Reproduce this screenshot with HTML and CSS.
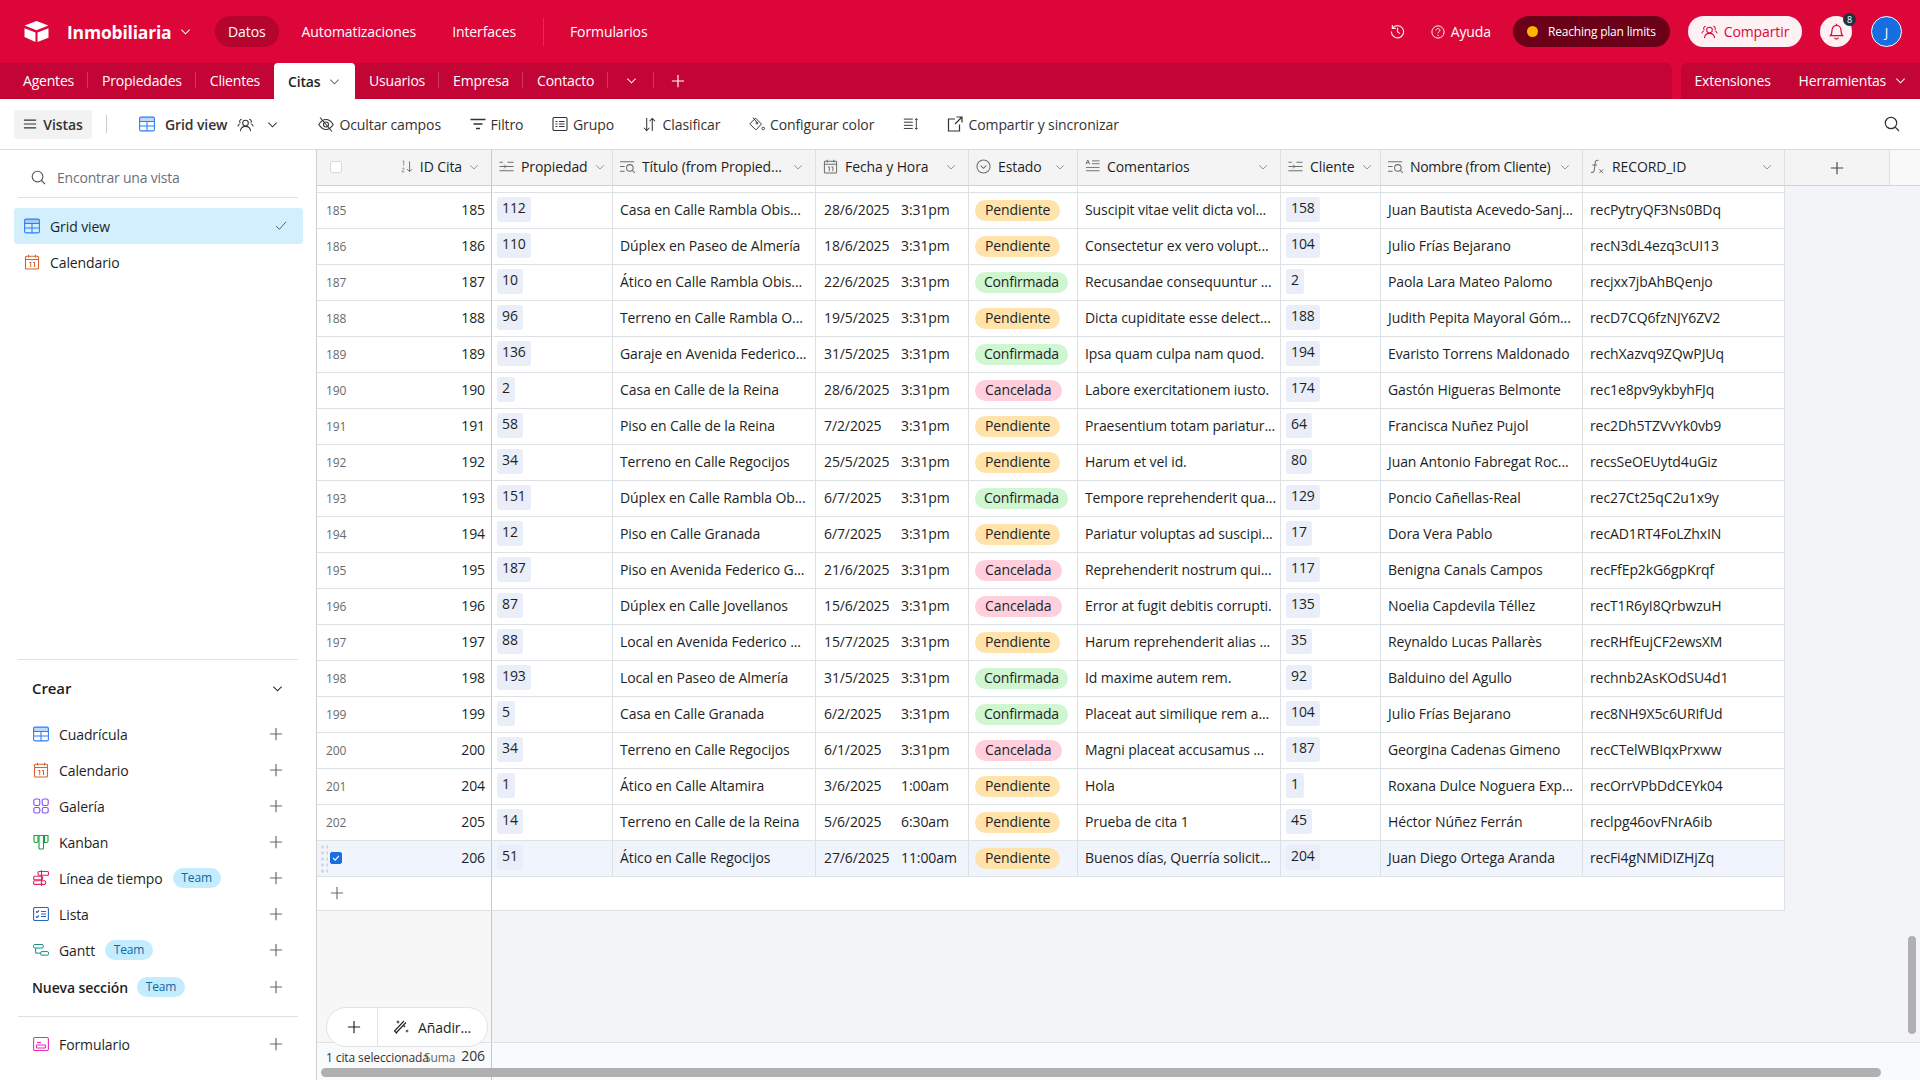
FILE: index.html
```html
<!DOCTYPE html>
<html lang="es">

<head>
    <meta charset="UTF-8">
    <title>Inmobiliaria: Citas</title>
    <link rel="stylesheet" href="styles.css">
</head>

<body>
    <!-- icon sprite -->
    <svg class="sprite" xmlns="http://www.w3.org/2000/svg">
        <symbol id="i-chev" viewBox="0 0 12 12"><path d="M1.5 4l4.5 4.5L10.5 4" fill="none" stroke="currentColor" stroke-width="1.1"/></symbol>
        <symbol id="i-plus" viewBox="0 0 16 16"><path d="M8 1v14M1 8h14" fill="none" stroke="currentColor" stroke-width="1.3"/></symbol>
        <symbol id="i-search" viewBox="0 0 16 16"><circle cx="7" cy="7" r="5.7" fill="none" stroke="currentColor" stroke-width="1.2"/><path d="M11.2 11.2L15 15" stroke="currentColor" stroke-width="1.2"/></symbol>
        <symbol id="i-grid" viewBox="0 0 16 16"><g fill="none" stroke="currentColor" stroke-width="1.1"><rect x=".6" y="1.1" width="14.8" height="13.8" rx="1.5"/><path d="M.6 5.5h14.8M.6 10h14.8M8 5.5v9.4"/></g><rect x=".6" y="1.1" width="14.8" height="4.4" fill="currentColor" opacity=".3"/></symbol>
        <symbol id="i-cal" viewBox="0 0 16 16"><g fill="none" stroke="currentColor" stroke-width="1.1"><rect x="1.5" y="2.3" width="13" height="12.7" rx="1"/><path d="M1.5 5.5h13M4.5 .8v2.8M11.5 .8v2.8"/></g><path d="M5.2 8h2v5h-1v-4h-1zM9 8h2v5h-1v-4H9z" fill="currentColor"/></symbol>
        <symbol id="i-gallery" viewBox="0 0 16 16"><g fill="none" stroke="currentColor" stroke-width="1.1"><rect x=".8" y="1" width="6" height="6.5" rx="1.8"/><rect x="9.2" y="1" width="6" height="6.5" rx="1.8"/><rect x=".8" y="9.5" width="6" height="5.5" rx="1.8"/><rect x="9.2" y="9.5" width="6" height="5.5" rx="1.8"/></g></symbol>
        <symbol id="i-kanban" viewBox="0 0 16 16"><g fill="none" stroke="currentColor" stroke-width="1.1"><path d="M1 1.5h4V7a1.5 1.5 0 0 1-1.5 1.5h-1A1.5 1.5 0 0 1 1 7z"/><path d="M6 1.5h4.5V14a1 1 0 0 1-1 1H7a1 1 0 0 1-1-1z"/><path d="M11.5 1.5H15V7a1.5 1.5 0 0 1-1.5 1.5h-2z"/></g></symbol>
        <symbol id="i-time" viewBox="0 0 16 16"><g fill="none" stroke="currentColor" stroke-width="1.1"><path d="M8.5 0v16"/><rect x="5" y="1.5" width="10.5" height="3.8" rx="1.2"/><rect x=".6" y="6.2" width="9" height="3.6" rx="1.2"/><rect x=".6" y="10.8" width="12" height="3.6" rx="1.2"/></g></symbol>
        <symbol id="i-list" viewBox="0 0 16 16"><g fill="none" stroke="currentColor" stroke-width="1.1"><rect x=".6" y="1.5" width="14.8" height="13" rx="1.2"/><path d="M3 5.5l1 1 2-2M3 10.5l1 1 2-2M8 5.5h5M8 8h5M8 10.5h5"/></g></symbol>
        <symbol id="i-gantt" viewBox="0 0 18 14"><g fill="none" stroke="currentColor" stroke-width="1.1"><rect x=".6" y=".8" width="11" height="4" rx="1.5"/><rect x="8.5" y="8.8" width="9" height="4" rx="1.5"/><path d="M3 5v5.5h5.5"/></g></symbol>
        <symbol id="i-form" viewBox="0 0 16 16"><g fill="none" stroke="currentColor" stroke-width="1.1"><rect x=".6" y="1.5" width="14.8" height="13" rx="1.5"/><rect x="3.5" y="9" width="9" height="3" rx=".5"/><path d="M4 6.5h4"/></g></symbol>
        <symbol id="i-menu" viewBox="0 0 16 16"><path d="M1 3.5h14M1 8h14M1 12.5h14" stroke="currentColor" stroke-width="1.3"/></symbol>
        <symbol id="i-people" viewBox="0 0 18 16"><g fill="none" stroke="currentColor" stroke-width="1.1"><circle cx="9" cy="6.5" r="3"/><path d="M3.5 15c.5-3.5 2.5-5 5.5-5s5 1.5 5.5 5"/><path d="M5 2.5a2.3 2.3 0 0 0-1.5 4M.8 10c.2-1.2 1-2 2-2.5M13 2.500a2.3 2.3 0 0 1 1.5 4M17.2 10c-.2-1.2-1-2-2-2.5"/></g></symbol>
        <symbol id="i-eyeoff" viewBox="0 0 16 16"><g fill="none" stroke="currentColor" stroke-width="1.1"><path d="M.8 8.5C3 5 5.5 3.5 8 3.5s5 1.5 7.2 5C13 12 10.500 13.500 8 13.500S3 12 .8 8.500z"/><circle cx="8" cy="8.5" r="2.5"/><path d="M2 1.500l12 14"/></g></symbol>
        <symbol id="i-filter" viewBox="0 0 16 16"><path d="M.5 3.5h15M3.5 8h9M6 12.5h4" stroke="currentColor" stroke-width="1.3"/></symbol>
        <symbol id="i-group" viewBox="0 0 16 16"><g fill="none" stroke="currentColor" stroke-width="1.1"><rect x="1" y="1.5" width="14" height="13" rx="1.2"/><path d="M3.5 5.5h2M7 5.5h5.5M3.5 8h2M7 8h5.5M3.5 10.5h2M7 10.5h5.5"/></g></symbol>
        <symbol id="i-updown" viewBox="0 0 14 16"><path d="M4 1v13.5M1 11.5l3 3 3-3M10 15V1.5M7 4.5l3-3 3 3" fill="none" stroke="currentColor" stroke-width="1.1"/></symbol>
        <symbol id="i-paint" viewBox="0 0 18 16"><g fill="none" stroke="currentColor" stroke-width="1.1"><path d="M7.5 1.5L14 8l-5.5 6a1 1 0 0 1-1.5 0L1.5 8.5a1 1 0 0 1 0-1.5z"/><path d="M4.5 .8L9 6.3"/><circle cx="9" cy="7" r="1"/></g><circle cx="16" cy="13" r="1.5" fill="none" stroke="currentColor"/></symbol>
        <symbol id="i-height" viewBox="0 0 18 16"><path d="M1 2.5h10M1 6h10M1 9.5h10M1 13h10" stroke="currentColor" stroke-width="1.1"/><path d="M15 2v12M13.5 3.5L15 2l1.5 1.5M13.5 12.5L15 14l1.5-1.5" fill="none" stroke="currentColor"/></symbol>
        <symbol id="i-share" viewBox="0 0 16 16"><path d="M8 3H1.500v12h11V8.500M9.500 1H15v5.500M15 1L8 8" fill="none" stroke="currentColor" stroke-width="1.2"/></symbol>
        <symbol id="i-sortnum" viewBox="0 0 14 16"><path d="M10 2v12M7 11l3 3 3-3" fill="none" stroke="currentColor" stroke-width="1.1"/><path d="M2 2l1.200-.8V7M1.200 10.500a1.300 1.300 0 0 1 2.500.3c0 1-2.500 2.200-2.500 3.500h2.700" fill="none" stroke="currentColor" stroke-width=".8"/></symbol>
        <symbol id="i-link" viewBox="0 0 16 16"><path d="M.5 8h15M.5 12.5h15M9 3.5h6.5M.5 3.5H4" stroke="currentColor" stroke-width="1.1"/><path d="M5.5 6l2 2-2 2" fill="none" stroke="currentColor"/></symbol>
        <symbol id="i-lookup" viewBox="0 0 16 16"><g fill="none" stroke="currentColor" stroke-width="1.1"><path d="M0 3h15M0 8h5M0 13h5"/><circle cx="10.5" cy="9.5" r="3.5"/><path d="M13 12l2.8 2.8"/></g></symbol>
        <symbol id="i-select" viewBox="0 0 16 16"><circle cx="8" cy="8" r="7" fill="none" stroke="currentColor" stroke-width="1.1"/><path d="M5 7l3 3 3-3" fill="none" stroke="currentColor" stroke-width="1.1"/></symbol>
        <symbol id="i-text" viewBox="0 0 16 16"><path d="M1 5.5l2-4.500 2 4.500M1.800 4h2.400M7.500 2h8M7.500 5h8M1 9h14.500M1 12.500h14.500" fill="none" stroke="currentColor"/></symbol>
        <symbol id="i-formula" viewBox="0 0 16 16"><path d="M9 1.500c-2.500-.8-3.200.5-3.500 2.500L4.500 12c-.3 2-1.500 3-3.500 2.200M2.500 6.500h5" fill="none" stroke="currentColor" stroke-width="1.1"/><path d="M10 11l4 4M14 11l-4 4" stroke="currentColor"/></symbol>
        <symbol id="i-history" viewBox="0 0 16 16"><path d="M2.700 4.500A6.500 6.500 0 1 1 1.500 8M2.500 1v3.700h3.700M8 4v4.300l2.500 2" fill="none" stroke="currentColor" stroke-width="1.2"/></symbol>
        <symbol id="i-help" viewBox="0 0 16 16"><circle cx="8" cy="8" r="7" fill="none" stroke="currentColor" stroke-width="1.1"/><path d="M5.800 6.200c0-1.300 1-2.200 2.200-2.200s2.200.9 2.200 2c0 1.700-2.200 1.700-2.200 3.500" fill="none" stroke="currentColor" stroke-width="1.1"/><circle cx="8" cy="11.800" r=".8" fill="currentColor"/></symbol>
        <symbol id="i-bell" viewBox="0 0 16 18"><path d="M1.500 13.500c1.500-1.500 1.700-3 1.700-5.500 0-3 2-5.500 4.800-5.500s4.800 2.500 4.800 5.500c0 2.500.2 4 1.700 5.500zM8 .8v1.700M6 15.500c.3 1 1 1.500 2 1.500s1.700-.5 2-1.500" fill="none" stroke="currentColor" stroke-width="1.3"/></symbol>
        <symbol id="i-wand" viewBox="0 0 16 16"><path d="M13 3.500L3 14M11 2L1.500 12 4 14.500M10 6l2 2" fill="none" stroke="currentColor" stroke-width="1.1"/><path d="M5 1l.6 1.400L7 3l-1.400.6L5 5l-.6-1.400L3 3l1.400-.6zM14 10l.5 1.500 1.500.5-1.500.5L14 14l-.5-1.500L12 12l1.500-.5z" fill="currentColor"/></symbol>
        <symbol id="i-check" viewBox="0 0 14 12"><path d="M1 6l4 4 8-9" fill="none" stroke="currentColor" stroke-width="1.1"/></symbol>
    </svg>

    <header class="topbar">
        <div class="base">
            <svg class="logo" viewBox="0 0 24 20"><path d="M12 0L.6 4.300 12 8.800l11.400-4.500zM13 11v9l10.500-4V6.800zM.5 6.800v8.500L11 20v-9z" fill="#fff"/></svg>
            <span class="base-name">Inmobiliaria</span>
            <svg class="ico-s"><use href="#i-chev"/></svg>
        </div>
        <nav class="mainnav">
            <a class="mainnav-item active">Datos</a>
            <a class="mainnav-item">Automatizaciones</a>
            <a class="mainnav-item">Interfaces</a>
            <span class="mainnav-sep"></span>
            <a class="mainnav-item">Formularios</a>
        </nav>
        <div class="top-right">
            <svg class="ico-history"><use href="#i-history"/></svg>
            <span class="help"><svg class="ico"><use href="#i-help"/></svg>Ayuda</span>
            <span class="limits"><i class="limits-dot"></i>Reaching plan limits</span>
            <span class="share-btn"><svg class="ico-people"><use href="#i-people"/></svg>Compartir</span>
            <span class="bell"><svg class="ico-bell"><use href="#i-bell"/></svg><b class="bell-badge">8</b></span>
            <span class="avatar">J</span>
        </div>
    </header>

    <div class="tabbar">
        <div class="tabs">
            <a class="tab sep">Agentes</a>
            <a class="tab sep">Propiedades</a>
            <a class="tab">Clientes</a>
            <a class="tab active">Citas<svg class="ico-s"><use href="#i-chev"/></svg></a>
            <a class="tab sep">Usuarios</a>
            <a class="tab sep">Empresa</a>
            <a class="tab sep">Contacto</a>
            <a class="tab tab-more sep"><svg class="ico-s"><use href="#i-chev"/></svg></a>
            <a class="tab tab-add"><svg class="ico"><use href="#i-plus"/></svg></a>
        </div>
        <div class="tabs-right">
            <a class="tab">Extensiones</a>
            <a class="tab">Herramientas<svg class="ico-s"><use href="#i-chev"/></svg></a>
        </div>
    </div>

    <div class="toolbar">
        <button class="views-btn"><svg class="ico"><use href="#i-menu"/></svg>Vistas</button>
        <span class="toolbar-sep"></span>
        <span class="tool view-name"><svg class="ico-16 blue"><use href="#i-grid"/></svg><b>Grid view</b><svg class="ico-people"><use href="#i-people"/></svg><svg class="ico-s view-chev"><use href="#i-chev"/></svg></span>
        <span class="tool"><svg class="ico-16"><use href="#i-eyeoff"/></svg>Ocultar campos</span>
        <span class="tool"><svg class="ico-16"><use href="#i-filter"/></svg>Filtro</span>
        <span class="tool"><svg class="ico-16"><use href="#i-group"/></svg>Grupo</span>
        <span class="tool"><svg class="ico-sort"><use href="#i-updown"/></svg>Clasificar</span>
        <span class="tool"><svg class="ico-16"><use href="#i-paint"/></svg>Configurar color</span>
        <span class="tool"><svg class="ico-16"><use href="#i-height"/></svg></span>
        <span class="tool"><svg class="ico-16"><use href="#i-share"/></svg>Compartir y sincronizar</span>
        <svg class="ico-16 toolbar-search"><use href="#i-search"/></svg>
    </div>

    <div class="main">
        <aside class="sidebar">
            <div class="view-search"><svg class="ico-search"><use href="#i-search"/></svg>Encontrar una vista</div>
            <div class="view-list">
                <div class="view-item selected"><svg class="ico-16 blue"><use href="#i-grid"/></svg>Grid view<svg class="view-check"><use href="#i-check"/></svg></div>
                <div class="view-item"><svg class="ico-16 orange"><use href="#i-cal"/></svg>Calendario</div>
            </div>
            <div class="create">
                <div class="create-head">Crear<svg class="ico-s"><use href="#i-chev"/></svg></div>
                <div class="create-item"><svg class="ico-16 blue"><use href="#i-grid"/></svg>Cuadrícula<svg class="add"><use href="#i-plus"/></svg></div>
                <div class="create-item"><svg class="ico-16 orange"><use href="#i-cal"/></svg>Calendario<svg class="add"><use href="#i-plus"/></svg></div>
                <div class="create-item"><svg class="ico-16 purple"><use href="#i-gallery"/></svg>Galería<svg class="add"><use href="#i-plus"/></svg></div>
                <div class="create-item"><svg class="ico-16 green"><use href="#i-kanban"/></svg>Kanban<svg class="add"><use href="#i-plus"/></svg></div>
                <div class="create-item"><svg class="ico-16 rose"><use href="#i-time"/></svg>Línea de tiempo<span class="team">Team</span><svg class="add"><use href="#i-plus"/></svg></div>
                <div class="create-item"><svg class="ico-16 navy"><use href="#i-list"/></svg>Lista<svg class="add"><use href="#i-plus"/></svg></div>
                <div class="create-item"><svg class="ico-16 teal"><use href="#i-gantt"/></svg>Gantt<span class="team">Team</span><svg class="add"><use href="#i-plus"/></svg></div>
                <div class="create-item section">Nueva sección<span class="team">Team</span><svg class="add"><use href="#i-plus"/></svg></div>
                <div class="create-item form-item"><svg class="ico-16 pink"><use href="#i-form"/></svg>Formulario<svg class="add"><use href="#i-plus"/></svg></div>
            </div>
        </aside>

        <section class="gridarea">
            <div class="row head">
                <div class="c c-first"><i class="checkbox"></i><svg class="ico-head sort-ico"><use href="#i-sortnum"/></svg><span>ID Cita</span><svg class="ico-s"><use href="#i-chev"/></svg></div>
                <div class="c"><svg class="ico-head"><use href="#i-link"/></svg><span>Propiedad</span><svg class="ico-s"><use href="#i-chev"/></svg></div>
                <div class="c"><svg class="ico-head"><use href="#i-lookup"/></svg><span>Título (from Propied...</span><svg class="ico-s"><use href="#i-chev"/></svg></div>
                <div class="c"><svg class="ico-head"><use href="#i-cal"/></svg><span>Fecha y Hora</span><svg class="ico-s"><use href="#i-chev"/></svg></div>
                <div class="c"><svg class="ico-head"><use href="#i-select"/></svg><span>Estado</span><svg class="ico-s"><use href="#i-chev"/></svg></div>
                <div class="c"><svg class="ico-head"><use href="#i-text"/></svg><span>Comentarios</span><svg class="ico-s"><use href="#i-chev"/></svg></div>
                <div class="c"><svg class="ico-head"><use href="#i-link"/></svg><span>Cliente</span><svg class="ico-s"><use href="#i-chev"/></svg></div>
                <div class="c"><svg class="ico-head"><use href="#i-lookup"/></svg><span class="head-tight">Nombre (from Cliente)</span><svg class="ico-s"><use href="#i-chev"/></svg></div>
                <div class="c"><svg class="ico-head"><use href="#i-formula"/></svg><span>RECORD_ID</span><svg class="ico-s"><use href="#i-chev"/></svg></div>
                <div class="c c-add"><svg class="ico-add"><use href="#i-plus"/></svg></div>
            </div>

            <div class="row gap"><div class="c c-first"></div><div class="c"></div><div class="c"></div><div class="c"></div><div class="c"></div><div class="c"></div><div class="c"></div><div class="c"></div><div class="c"></div></div>

            <div class="row"><div class="c c-first"><span class="num">185</span><span class="id">185</span></div><div class="c"><span class="chip">112</span></div><div class="c">Casa en Calle Rambla Obis...</div><div class="c c-date"><span>28/6/2025</span><span>3:31pm</span></div><div class="c"><span class="pill pend">Pendiente</span></div><div class="c">Suscipit vitae velit dicta vol...</div><div class="c"><span class="chip">158</span></div><div class="c">Juan Bautista Acevedo-Sanj...</div><div class="c">recPytryQF3Ns0BDq</div></div>
            <div class="row"><div class="c c-first"><span class="num">186</span><span class="id">186</span></div><div class="c"><span class="chip">110</span></div><div class="c">Dúplex en Paseo de Almería</div><div class="c c-date"><span>18/6/2025</span><span>3:31pm</span></div><div class="c"><span class="pill pend">Pendiente</span></div><div class="c">Consectetur ex vero volupt...</div><div class="c"><span class="chip">104</span></div><div class="c">Julio Frías Bejarano</div><div class="c">recN3dL4ezq3cUI13</div></div>
            <div class="row"><div class="c c-first"><span class="num">187</span><span class="id">187</span></div><div class="c"><span class="chip">10</span></div><div class="c">Ático en Calle Rambla Obis...</div><div class="c c-date"><span>22/6/2025</span><span>3:31pm</span></div><div class="c"><span class="pill conf">Confirmada</span></div><div class="c">Recusandae consequuntur ...</div><div class="c"><span class="chip">2</span></div><div class="c">Paola Lara Mateo Palomo</div><div class="c">recjxx7jbAhBQenjo</div></div>
            <div class="row"><div class="c c-first"><span class="num">188</span><span class="id">188</span></div><div class="c"><span class="chip">96</span></div><div class="c">Terreno en Calle Rambla O...</div><div class="c c-date"><span>19/5/2025</span><span>3:31pm</span></div><div class="c"><span class="pill pend">Pendiente</span></div><div class="c">Dicta cupiditate esse delect...</div><div class="c"><span class="chip">188</span></div><div class="c">Judith Pepita Mayoral Góm...</div><div class="c">recD7CQ6fzNJY6ZV2</div></div>
            <div class="row"><div class="c c-first"><span class="num">189</span><span class="id">189</span></div><div class="c"><span class="chip">136</span></div><div class="c">Garaje en Avenida Federico...</div><div class="c c-date"><span>31/5/2025</span><span>3:31pm</span></div><div class="c"><span class="pill conf">Confirmada</span></div><div class="c">Ipsa quam culpa nam quod.</div><div class="c"><span class="chip">194</span></div><div class="c">Evaristo Torrens Maldonado</div><div class="c">rechXazvq9ZQwPJUq</div></div>
            <div class="row"><div class="c c-first"><span class="num">190</span><span class="id">190</span></div><div class="c"><span class="chip">2</span></div><div class="c">Casa en Calle de la Reina</div><div class="c c-date"><span>28/6/2025</span><span>3:31pm</span></div><div class="c"><span class="pill canc">Cancelada</span></div><div class="c">Labore exercitationem iusto.</div><div class="c"><span class="chip">174</span></div><div class="c">Gastón Higueras Belmonte</div><div class="c">rec1e8pv9ykbyhFJq</div></div>
            <div class="row"><div class="c c-first"><span class="num">191</span><span class="id">191</span></div><div class="c"><span class="chip">58</span></div><div class="c">Piso en Calle de la Reina</div><div class="c c-date"><span>7/2/2025</span><span>3:31pm</span></div><div class="c"><span class="pill pend">Pendiente</span></div><div class="c">Praesentium totam pariatur...</div><div class="c"><span class="chip">64</span></div><div class="c">Francisca Nuñez Pujol</div><div class="c">rec2Dh5TZVvYk0vb9</div></div>
            <div class="row"><div class="c c-first"><span class="num">192</span><span class="id">192</span></div><div class="c"><span class="chip">34</span></div><div class="c">Terreno en Calle Regocijos</div><div class="c c-date"><span>25/5/2025</span><span>3:31pm</span></div><div class="c"><span class="pill pend">Pendiente</span></div><div class="c">Harum et vel id.</div><div class="c"><span class="chip">80</span></div><div class="c">Juan Antonio Fabregat Roc...</div><div class="c">recsSeOEUytd4uGiz</div></div>
            <div class="row"><div class="c c-first"><span class="num">193</span><span class="id">193</span></div><div class="c"><span class="chip">151</span></div><div class="c">Dúplex en Calle Rambla Ob...</div><div class="c c-date"><span>6/7/2025</span><span>3:31pm</span></div><div class="c"><span class="pill conf">Confirmada</span></div><div class="c">Tempore reprehenderit qua...</div><div class="c"><span class="chip">129</span></div><div class="c">Poncio Cañellas-Real</div><div class="c">rec27Ct25qC2u1x9y</div></div>
            <div class="row"><div class="c c-first"><span class="num">194</span><span class="id">194</span></div><div class="c"><span class="chip">12</span></div><div class="c">Piso en Calle Granada</div><div class="c c-date"><span>6/7/2025</span><span>3:31pm</span></div><div class="c"><span class="pill pend">Pendiente</span></div><div class="c">Pariatur voluptas ad suscipi...</div><div class="c"><span class="chip">17</span></div><div class="c">Dora Vera Pablo</div><div class="c">recAD1RT4FoLZhxIN</div></div>
            <div class="row"><div class="c c-first"><span class="num">195</span><span class="id">195</span></div><div class="c"><span class="chip">187</span></div><div class="c">Piso en Avenida Federico G...</div><div class="c c-date"><span>21/6/2025</span><span>3:31pm</span></div><div class="c"><span class="pill canc">Cancelada</span></div><div class="c">Reprehenderit nostrum qui...</div><div class="c"><span class="chip">117</span></div><div class="c">Benigna Canals Campos</div><div class="c">recFfEp2kG6gpKrqf</div></div>
            <div class="row"><div class="c c-first"><span class="num">196</span><span class="id">196</span></div><div class="c"><span class="chip">87</span></div><div class="c">Dúplex en Calle Jovellanos</div><div class="c c-date"><span>15/6/2025</span><span>3:31pm</span></div><div class="c"><span class="pill canc">Cancelada</span></div><div class="c">Error at fugit debitis corrupti.</div><div class="c"><span class="chip">135</span></div><div class="c">Noelia Capdevila Téllez</div><div class="c">recT1R6yI8QrbwzuH</div></div>
            <div class="row"><div class="c c-first"><span class="num">197</span><span class="id">197</span></div><div class="c"><span class="chip">88</span></div><div class="c">Local en Avenida Federico ...</div><div class="c c-date"><span>15/7/2025</span><span>3:31pm</span></div><div class="c"><span class="pill pend">Pendiente</span></div><div class="c">Harum reprehenderit alias ...</div><div class="c"><span class="chip">35</span></div><div class="c">Reynaldo Lucas Pallarès</div><div class="c">recRHfEujCF2ewsXM</div></div>
            <div class="row"><div class="c c-first"><span class="num">198</span><span class="id">198</span></div><div class="c"><span class="chip">193</span></div><div class="c">Local en Paseo de Almería</div><div class="c c-date"><span>31/5/2025</span><span>3:31pm</span></div><div class="c"><span class="pill conf">Confirmada</span></div><div class="c">Id maxime autem rem.</div><div class="c"><span class="chip">92</span></div><div class="c">Balduino del Agullo</div><div class="c">rechnb2AsKOdSU4d1</div></div>
            <div class="row"><div class="c c-first"><span class="num">199</span><span class="id">199</span></div><div class="c"><span class="chip">5</span></div><div class="c">Casa en Calle Granada</div><div class="c c-date"><span>6/2/2025</span><span>3:31pm</span></div><div class="c"><span class="pill conf">Confirmada</span></div><div class="c">Placeat aut similique rem a...</div><div class="c"><span class="chip">104</span></div><div class="c">Julio Frías Bejarano</div><div class="c">rec8NH9X5c6URIfUd</div></div>
            <div class="row"><div class="c c-first"><span class="num">200</span><span class="id">200</span></div><div class="c"><span class="chip">34</span></div><div class="c">Terreno en Calle Regocijos</div><div class="c c-date"><span>6/1/2025</span><span>3:31pm</span></div><div class="c"><span class="pill canc">Cancelada</span></div><div class="c">Magni placeat accusamus ...</div><div class="c"><span class="chip">187</span></div><div class="c">Georgina Cadenas Gimeno</div><div class="c">recCTelWBIqxPrxww</div></div>
            <div class="row"><div class="c c-first"><span class="num">201</span><span class="id">204</span></div><div class="c"><span class="chip">1</span></div><div class="c">Ático en Calle Altamira</div><div class="c c-date"><span>3/6/2025</span><span>1:00am</span></div><div class="c"><span class="pill pend">Pendiente</span></div><div class="c">Hola</div><div class="c"><span class="chip">1</span></div><div class="c">Roxana Dulce Noguera Exp...</div><div class="c">recOrrVPbDdCEYk04</div></div>
            <div class="row"><div class="c c-first"><span class="num">202</span><span class="id">205</span></div><div class="c"><span class="chip">14</span></div><div class="c">Terreno en Calle de la Reina</div><div class="c c-date"><span>5/6/2025</span><span>6:30am</span></div><div class="c"><span class="pill pend">Pendiente</span></div><div class="c">Prueba de cita 1</div><div class="c"><span class="chip">45</span></div><div class="c">Héctor Núñez Ferrán</div><div class="c">reclpg46ovFNrA6ib</div></div>
            <div class="row picked"><div class="c c-first"><i class="dots"></i><i class="checkbox on"><svg viewBox="0 0 14 12"><path d="M3 6l3 3 5-6" fill="none" stroke="#fff" stroke-width="1.6"/></svg></i><span class="id">206</span></div><div class="c"><span class="chip">51</span></div><div class="c">Ático en Calle Regocijos</div><div class="c c-date"><span>27/6/2025</span><span>11:00am</span></div><div class="c"><span class="pill pend">Pendiente</span></div><div class="c">Buenos días, Querría solicit...</div><div class="c"><span class="chip">204</span></div><div class="c">Juan Diego Ortega Aranda</div><div class="c">recFi4gNMiDIZHjZq</div></div>

            <div class="row add-row"><div class="c c-first"><svg class="ico"><use href="#i-plus"/></svg></div><div class="c c-rest"></div></div>

            <div class="filler"><div class="filler-left"></div></div>

            <footer class="summary">
                <div class="summary-left"><span class="summary-count">1 cita seleccionada</span><span class="summary-label">Suma</span><span class="summary-val">206</span></div>
            </footer>

            <div class="add-float">
                <span class="add-float-plus"><svg class="ico"><use href="#i-plus"/></svg></span>
                <span class="add-float-more"><svg class="ico-16"><use href="#i-wand"/></svg>Añadir...</span>
            </div>
            <div class="scroll-h"></div>
            <div class="scroll-v"></div>
        </section>
    </div>
</body>

</html>
```

FILE: styles.css
```css
* {
    box-sizing: border-box;
    margin: 0;
    padding: 0;
}

body {
    font-family: "Open Sans", "Noto Sans", sans-serif;
    font-size: 14px;
    letter-spacing: -0.1px;
    color: #1d1f25;
    background-color: #fff;
    width: 1920px;
    height: 1080px;
    overflow: hidden;
    display: flex;
    flex-direction: column;
}

.sprite {
    display: none;
}

svg {
    display: block;
    flex: none;
}

.ico {
    width: 14px;
    height: 14px;
}

.ico-s {
    width: 11px;
    height: 11px;
}

.ico-16 {
    width: 16px;
    height: 16px;
}

.ico-people {
    width: 17px;
    height: 15px;
}

.blue { color: #2d7ff9; }
.orange { color: #d9622b; }
.purple { color: #8b46ff; }
.green { color: #11a13a; }
.rose { color: #e0245e; }
.navy { color: #2b64c4; }
.teal { color: #0c8a7c; }
.pink { color: #e929ba; }

/* top bar */
.topbar {
    height: 63px;
    flex: none;
    background-color: #dc0639;
    color: #fff;
    display: flex;
    align-items: center;
    padding-left: 24px;
}

.base {
    display: flex;
    align-items: center;
    width: 191px;
}

.logo {
    width: 25px;
    height: 21px;
    margin-right: 18px;
}

.base-name {
    font-size: 17.5px;
    font-weight: 700;
    letter-spacing: -0.2px;
    margin-right: 9px;
}

.mainnav {
    display: flex;
    align-items: center;
}

.mainnav-item {
    height: 31px;
    line-height: 31px;
    padding: 0 13px;
    margin-right: 10px;
    border-radius: 16px;
    white-space: nowrap;
}

.mainnav-item.active {
    background-color: #b5042e;
}

.mainnav-sep {
    width: 1px;
    height: 28px;
    background-color: rgba(255, 255, 255, 0.15);
    margin: 0 13px 0 4px;
}

.top-right {
    margin-left: auto;
    display: flex;
    align-items: center;
    padding-right: 18px;
}

.ico-history {
    width: 15px;
    height: 15px;
    margin-right: 26px;
    opacity: 0.9;
}

.help {
    display: flex;
    align-items: center;
    gap: 6px;
    margin-right: 22px;
}

.limits {
    height: 31px;
    width: 157px;
    background-color: #6b0019;
    border-radius: 16px;
    display: flex;
    align-items: center;
    padding-left: 14px;
    font-size: 12px;
    font-weight: 500;
    letter-spacing: -0.2px;
    white-space: nowrap;
    margin-right: 18px;
}

.limits-dot {
    width: 11px;
    height: 11px;
    border-radius: 50%;
    background-color: #fcb400;
    margin-right: 10px;
}

.share-btn {
    height: 31px;
    width: 114px;
    background-color: #fdf1f4;
    color: #dc0639;
    border-radius: 16px;
    display: flex;
    align-items: center;
    justify-content: center;
    gap: 6px;
    margin-right: 18px;
}

.bell {
    position: relative;
    width: 32px;
    height: 31px;
    border-radius: 50%;
    background-color: #fdf1f4;
    color: #dc0639;
    display: flex;
    align-items: center;
    justify-content: center;
    margin-right: 19px;
}

.ico-bell {
    width: 15px;
    height: 17px;
}

.bell-badge {
    position: absolute;
    top: -3px;
    right: -4px;
    width: 13px;
    height: 13px;
    border-radius: 50%;
    background-color: #23313f;
    color: #fff;
    font-size: 9px;
    font-weight: 400;
    line-height: 13px;
    text-align: center;
}

.avatar {
    width: 31px;
    height: 31px;
    border-radius: 50%;
    background-color: #166ee1;
    border: 1px solid #fff;
    color: #fff;
    font-size: 13px;
    display: flex;
    align-items: center;
    justify-content: center;
}

/* table tabs */
.tabbar {
    height: 36px;
    flex: none;
    display: flex;
    background-color: #dc0639;
    color: #fff;
    letter-spacing: -0.2px;
}

.tabs,
.tabs-right {
    display: flex;
    align-items: stretch;
    background-color: #c30536;
    border-bottom: 1px solid #b8042f;
}

.tabs {
    width: 1673px;
    padding-left: 9px;
    border-top-right-radius: 6px;
}

.tabs-right {
    margin-left: 9px;
    flex: 1;
    border-top-left-radius: 6px;
}

.tab {
    display: flex;
    align-items: center;
    gap: 9px;
    padding: 0 14px;
    white-space: nowrap;
    position: relative;
}

.tab.sep::after {
    content: "";
    position: absolute;
    right: 0;
    top: 9px;
    height: 16px;
    width: 1px;
    background-color: rgba(255, 255, 255, 0.2);
}

.tab.active {
    background-color: #fff;
    color: #1d1f25;
    font-weight: 600;
    border-radius: 4px 4px 0 0;
    height: 36px;
    width: 81px;
}

.tab.active .ico-s {
    color: #666;
}

.tab-more {
    width: 46px;
    justify-content: center;
}

.tab-add {
    padding-left: 17px;
}

/* view toolbar */
.toolbar {
    height: 51px;
    flex: none;
    display: flex;
    align-items: center;
    padding-left: 14px;
    border-bottom: 1px solid #dcdcdc;
    color: #333;
}

.views-btn {
    width: 78px;
    height: 29px;
    border: none;
    border-radius: 3px;
    background-color: #f2f2f2;
    display: flex;
    align-items: center;
    justify-content: center;
    gap: 6px;
    font-family: inherit;
    font-size: 14px;
    letter-spacing: -0.1px;
    font-weight: 600;
    color: #333;
}

.toolbar-sep {
    width: 1px;
    height: 18px;
    background-color: #ccc;
    margin: 0 32px 0 14px;
}

.tool {
    display: flex;
    align-items: center;
    gap: 5px;
    margin-right: 28.6px;
    white-space: nowrap;
}

.view-name {
    gap: 10px;
    margin-right: 40px;
}

.view-name b {
    font-weight: 600;
}

.view-chev {
    margin-left: 3px;
}

.ico-sort {
    width: 13px;
    height: 15px;
    margin-right: 2px;
}

.toolbar-search {
    margin-left: auto;
    margin-right: 20px;
}

/* sidebar */
.main {
    flex: 1;
    display: flex;
    min-height: 0;
}

.sidebar {
    width: 317px;
    flex: none;
    border-right: 1px solid #cfcfcf;
    display: flex;
    flex-direction: column;
}

.view-search {
    height: 48px;
    margin: 0 18px;
    padding: 8px 0 0 13px;
    border-bottom: 1px solid #e0e0e0;
    display: flex;
    align-items: center;
    color: #6d7078;
    letter-spacing: -0.2px;
}

.ico-search {
    width: 15px;
    height: 15px;
    margin-right: 11px;
    color: #555;
}

.view-list {
    padding: 10px 13px 0 14px;
}

.view-item {
    height: 36px;
    display: flex;
    align-items: center;
    gap: 10px;
    padding-left: 10px;
    border-radius: 3px;
    font-weight: 500;
}

.view-item.selected {
    background-color: #d3effd;
}

.view-check {
    width: 12px;
    height: 10px;
    margin-left: auto;
    margin-right: 16px;
    color: #555;
}

.create {
    margin: auto 18px 0;
    padding: 0 15px 18px 14px;
    border-top: 1px solid #e0e0e0;
}

.create-head {
    height: 56px;
    display: flex;
    align-items: center;
    justify-content: space-between;
    font-size: 15px;
    font-weight: 600;
}

.create-item {
    height: 36px;
    display: flex;
    align-items: center;
    gap: 10px;
    font-weight: 500;
}

.create-item .add {
    width: 14px;
    height: 14px;
    margin-left: auto;
    color: #666;
}

.create-item .ico-16 {
    margin-left: 1px;
}

.team {
    height: 20px;
    line-height: 20px;
    width: 48px;
    text-align: center;
    border-radius: 10px;
    background-color: #c4ecff;
    color: #0f68a2;
    font-size: 12px;
    font-weight: 400;
}

.create-item.section {
    height: 38px;
    gap: 9px;
    font-weight: 600;
}

.form-item {
    margin-top: 20px;
    position: relative;
}

.form-item::before {
    content: "";
    position: absolute;
    left: -14px;
    right: -15px;
    top: -10px;
    border-top: 1px solid #e0e0e0;
}

/* grid */
.gridarea {
    flex: 1;
    min-width: 0;
    position: relative;
    display: flex;
    flex-direction: column;
    background-color: #f2f4f8;
}

.row {
    display: grid;
    grid-template-columns: 175px 121px 203px 153px 109px 203px 100px 202px 202px;
    width: 1468px;
    height: 36px;
    flex: none;
    background-color: #fff;
}

.c {
    display: flex;
    align-items: center;
    padding: 0 0 2px 7px;
    min-width: 0;
    white-space: nowrap;
    overflow: hidden;
    border-right: 1px solid #dde1e3;
    border-bottom: 1px solid #dde1e3;
}

.c-first {
    position: relative;
    border-right-color: #c8c8c8;
    padding-left: 9px;
}

.head {
    grid-template-columns: 175px 121px 203px 153px 109px 203px 100px 202px 202px 105px;
    width: 1573px;
    background-color: #f4f4f4;
    position: relative;
}

.head::after {
    content: "";
    position: absolute;
    left: 1573px;
    width: 30px;
    top: 0;
    bottom: 0;
    background-color: #f9f9f9;
    border-bottom: 1px solid #d5d5d5;
}

.head .c {
    border-bottom-color: #d0d0d0;
    padding-left: 7px;
    padding-right: 12px;
    gap: 7px;
}

.head .c .ico-s {
    margin-left: auto;
    color: #8a8a8a;
    width: 10px;
    height: 10px;
}

.head .c-first {
    padding-left: 13px;
}

.head-tight {
    letter-spacing: -0.3px;
}

.ico-head {
    width: 15px;
    height: 15px;
    color: #6d6d6d;
}

.sort-ico {
    margin-left: auto;
    width: 12px;
}

.head .c-first .ico-s {
    margin-left: 0;
}

.head .c-add {
    justify-content: center;
    padding: 0;
}

.ico-add {
    width: 14px;
    height: 14px;
    color: #444;
}

.gap {
    height: 7px;
}

.gap .c {
    padding: 0;
}

.num {
    font-size: 12px;
    color: #6a6a6a;
    margin-top: 2px;
}

.id {
    margin-left: auto;
    padding-right: 6px;
}

.chip {
    display: inline-block;
    height: 25px;
    line-height: 22px;
    padding: 0 5px;
    margin-left: -2px;
    border-radius: 3px;
    background-color: #e9eef9;
}

.c-date {
    padding-left: 8px;
}

.c-date span:first-child {
    width: 77px;
}

.pill {
    height: 21px;
    line-height: 20px;
    padding: 0 10px;
    border-radius: 11px;
    margin: 1px 0 0 -1px;
}

.pend { background-color: #ffe3ab; }
.conf { background-color: #cff5d1; padding: 0 9px; letter-spacing: -0.2px; }
.canc { background-color: #ffd0dc; }

.picked {
    background-color: #f0f4fd;
}

.checkbox {
    display: block;
    width: 12px;
    height: 12px;
    border: 1px solid #d9d9d9;
    border-radius: 2px;
    background-color: #fff;
    flex: none;
}

.checkbox.on {
    background-color: #166ee1;
    border-color: #166ee1;
    margin-left: 4px;
}

.checkbox.on svg {
    width: 10px;
    height: 10px;
}

.dots {
    position: absolute;
    left: 3px;
    top: 3px;
    width: 8px;
    height: 30px;
    background-image: radial-gradient(#d6d9e0 1.3px, transparent 1.4px);
    background-size: 5px 6px;
}

.add-row {
    height: 34px;
    grid-template-columns: 175px 1293px;
}

.add-row .ico {
    color: #6d6d6d;
    margin-left: 4px;
}

.filler {
    flex: 1;
    min-height: 0;
}

.filler-left {
    width: 175px;
    height: 100%;
    background-color: #f7f7f7;
    border-right: 1px solid #c8c8c8;
}

.summary {
    height: 38px;
    flex: none;
    background-color: #f9fafc;
    border-top: 1px solid #e0e0e0;
}

/* the reference really has the count running under the sum label */
.summary-left {
    width: 175px;
    height: 100%;
    border-right: 1px solid #c8c8c8;
    position: relative;
    color: #333;
}

.summary-count {
    position: absolute;
    left: 9px;
    top: 6px;
    font-size: 12px;
    white-space: nowrap;
}

.summary-label {
    position: absolute;
    left: 107px;
    top: 6px;
    font-size: 12px;
    color: #666;
}

.summary-val {
    position: absolute;
    right: 6px;
    top: 3px;
}

.add-float {
    position: absolute;
    left: 9px;
    bottom: 33px;
    width: 162px;
    height: 40px;
    background-color: #fff;
    border: 1px solid #e2e2e2;
    border-radius: 20px;
    display: flex;
    align-items: center;
}

.add-float-plus {
    width: 51px;
    height: 100%;
    padding-left: 4px;
    border-right: 1px solid #e2e2e2;
    display: flex;
    align-items: center;
    justify-content: center;
}

.add-float-more {
    display: flex;
    align-items: center;
    gap: 9px;
    padding-left: 15px;
}

.scroll-h {
    position: absolute;
    left: 4px;
    bottom: 3px;
    width: 1560px;
    height: 9px;
    border-radius: 5px;
    background-color: #b0b0b0;
}

.scroll-v {
    position: absolute;
    left: 1591px;
    top: 786px;
    width: 8px;
    height: 98px;
    border-radius: 4px;
    background-color: #b0b0b0;
}
```
